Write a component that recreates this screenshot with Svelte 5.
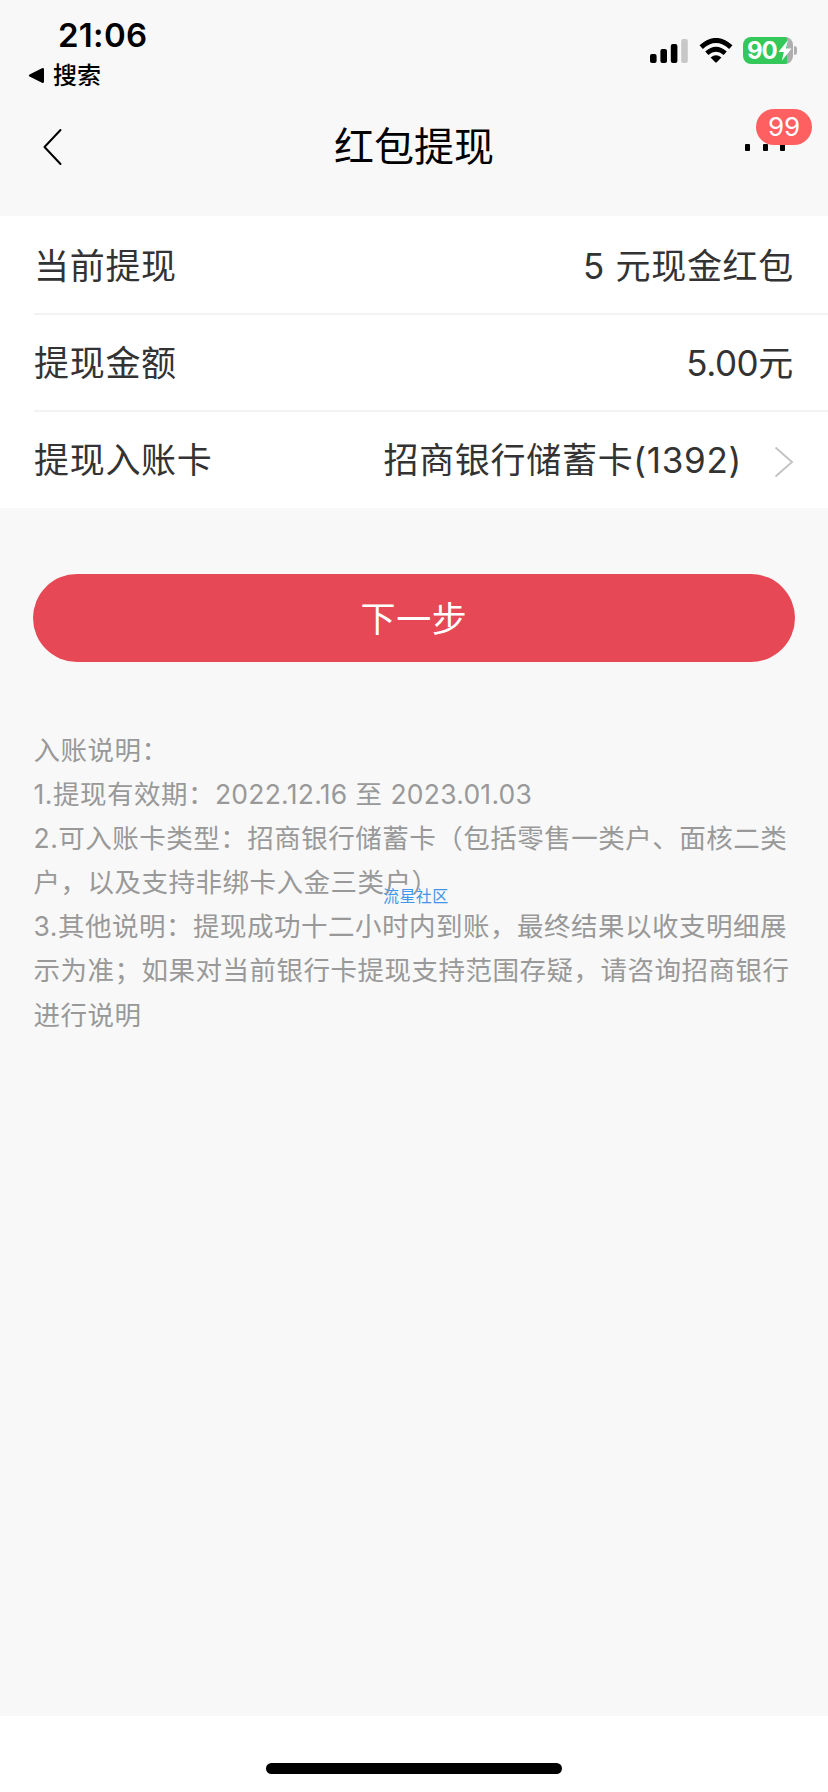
<script>
  const signal = [
    { x: 0, height: 9 },
    { x: 10.4, height: 14 },
    { x: 20.8, height: 19 },
    { x: 31.2, height: 24, weak: true },
  ];

  const rows = [
    { label: '当前提现', value: '5 元现金红包' },
    { label: '提现金额', value: '5.00元' },
    { label: '提现入账卡', value: '招商银行储蓄卡(1392)', link: true },
  ];

  const notes = [
    '入账说明：',
    '1.提现有效期：2022.12.16 至 2023.01.03',
    '2.可入账卡类型：招商银行储蓄卡（包括零售一类户、面核二类',
    '户，以及支持非绑卡入金三类户）',
    '3.其他说明：提现成功十二小时内到账，最终结果以收支明细展',
    '示为准；如果对当前银行卡提现支持范围存疑，请咨询招商银行',
    '进行说明',
  ];

  // amounts and dates get their own, tighter spacing
  const split = (text) => text.split(/(\d+\.\d[\d.]*)/).filter(Boolean);
  const isNumber = (part) => /^\d+\.\d/.test(part);
</script>

<div class="page">
  <header>
    <div class="status">
      <div class="status-left">
        <div class="time">21:06</div>
        <div class="return">
          <svg width="17" height="17" viewBox="0 0 17 17">
            <path d="M2 7.2 14 1.2Q16 .4 16 2.4V14.6Q16 16.6 14 15.8L2 9.8Q-.4 8.5 2 7.2Z" />
          </svg>
          <span>搜索</span>
        </div>
      </div>
      <div class="status-right">
        <svg class="signal" width="38" height="24" viewBox="0 0 38 24">
          {#each signal as bar}
            <rect x={bar.x} y={24 - bar.height} width="6.6" height={bar.height} rx="2" fill={bar.weak ? '#c7c7c7' : '#000'} />
          {/each}
        </svg>
        <svg class="wifi" width="34" height="25" viewBox="0 0 34 25">
          <path d="M2.2 9.2Q17-4.2 31.8 9.2" fill="none" stroke="#000" stroke-width="5" />
          <path d="M7.8 15.2Q17 7.2 26.2 15.2" fill="none" stroke="#000" stroke-width="4.8" />
          <path d="M11.6 19.4Q17 15 22.4 19.4L18 24Q17 25 16 24Z" />
        </svg>
        <div class="battery">
          <span>90</span>
          <svg width="14" height="21" viewBox="0 0 13 20">
            <path d="M9.2.2.2 11.5H5.4L3.5 19.8 12.8 8H7.4Z" fill="#fff" />
          </svg>
        </div>
        <div class="nub"></div>
      </div>
    </div>
    <nav>
      <button class="back" aria-label="返回">
        <svg width="20" height="38" viewBox="0 0 20 38">
          <path d="M17.5 2 1.5 19 17.5 36" fill="none" stroke="#000" stroke-width="2" stroke-linecap="round" stroke-linejoin="round" />
        </svg>
      </button>
      <h1>红包提现</h1>
      <button class="more" aria-label="更多">
        <i></i><i></i><i></i>
        <span class="badge">99</span>
      </button>
    </nav>
  </header>

  <main>
    <section class="list">
      {#each rows as row}
        <div class="row">
          <span>{row.label}</span>
          <span class="value">{#each split(row.value) as part}<span class:number={isNumber(part)}>{part}</span>{/each}</span>
          {#if row.link}
            <svg class="arrow" width="20" height="32" viewBox="0 0 20 32">
              <path d="M1.5 1.5 18 16 1.5 30.5" fill="none" stroke="#c4c4c4" stroke-width="2" />
            </svg>
          {/if}
        </div>
      {/each}
    </section>

    <button class="next">下一步</button>

    <section class="notes">
      {#each notes as line}
        <p>{#each split(line) as part}<span class:number={isNumber(part)}>{part}</span>{/each}</p>
      {/each}
      <span class="watermark">流星社区</span>
    </section>
  </main>

  <footer>
    <div class="home"></div>
  </footer>
</div>

<style>
  :global(body) {
    margin: 0;
  }

  .page {
    display: flex;
    flex-direction: column;
    width: 828px;
    height: 1792px;
    overflow: hidden;
    background: #f8f8f8;
    color: #333;
    font-family: Inter, 'Noto Sans CJK SC', sans-serif;
  }

  button {
    margin: 0;
    padding: 0;
    border: none;
    background: none;
    font-family: inherit;
  }

  svg {
    display: block;
    flex: none;
  }

  header {
    height: 216px;
    color: #000;
  }

  .status {
    display: flex;
    justify-content: space-between;
    height: 96px;
  }

  .status-left {
    padding: 15px 0 0 28px;
  }

  .time {
    padding-left: 30px;
    font-size: 33px;
    line-height: 40px;
    font-weight: 600;
    letter-spacing: 0.3px;
  }

  .return {
    display: flex;
    align-items: center;
    gap: 9px;
    height: 41px;
    font-size: 24px;
    line-height: 30px;
    font-weight: 500;
  }

  .return span {
    margin-left: -1px;
  }

  .status-right {
    display: flex;
    align-items: center;
    height: 27px;
    padding: 37px 31px 0 0;
  }

  .wifi {
    margin-left: 11px;
  }

  .battery {
    display: flex;
    align-items: center;
    gap: 1px;
    width: 46px;
    height: 27px;
    margin-left: 10px;
    padding-left: 4px;
    border-radius: 8px;
    background: linear-gradient(90deg, #34c759 44px, #aeaeae 44px);
    color: #fff;
    font-size: 24px;
    line-height: 27px;
    font-weight: 700;
    letter-spacing: -1px;
  }

  .nub {
    width: 3px;
    height: 9px;
    margin-left: 1px;
    border-radius: 0 4px 4px 0;
    background: #aeaeae;
  }

  nav {
    display: flex;
    align-items: center;
    justify-content: space-between;
    height: 102px;
    padding: 0 43px 0 43px;
  }

  .back {
    width: 40px;
  }

  h1 {
    margin: 0;
    font-size: 40px;
    line-height: 60px;
    font-weight: 400;
  }

  .more {
    position: relative;
    display: flex;
    justify-content: space-between;
    width: 40px;
  }

  .more i {
    width: 5px;
    height: 7px;
    border-radius: 1px;
    background: #000;
  }

  .badge {
    position: absolute;
    left: 11px;
    bottom: 6px;
    width: 56px;
    height: 36px;
    border-radius: 18px;
    background: #fe6061;
    color: #fff;
    font-size: 26px;
    line-height: 36px;
    font-weight: 400;
    text-align: center;
  }

  .list {
    padding: 2px 0 0 34px;
    background: #fff;
  }

  .row {
    display: flex;
    align-items: center;
    box-sizing: border-box;
    height: 97px;
    padding: 0 34px 5px 0;
    border-bottom: 2px solid #f3f3f3;
    font-size: 35px;
    letter-spacing: 0.7px;
    white-space: pre;
  }

  .row:last-child {
    height: 96px;
    border-bottom: none;
  }

  .value {
    margin-left: auto;
  }

  .value .number {
    letter-spacing: -0.4px;
  }

  .arrow {
    margin: 8px 0 0 32px;
  }

  .next {
    display: block;
    width: 762px;
    height: 88px;
    margin: 66px auto 0;
    padding-bottom: 3px;
    border-radius: 44px;
    background: #e64955;
    color: #fff;
    font-size: 35px;
    letter-spacing: 0.7px;
  }

  .notes {
    position: relative;
    margin-top: 66px;
    padding-left: 33.5px;
    color: #999;
    font-size: 26.5px;
    line-height: 44.1px;
    letter-spacing: 0.5px;
    white-space: pre;
  }

  .notes p {
    margin: 0;
  }

  .notes .number {
    letter-spacing: 0.25px;
  }

  .watermark {
    position: absolute;
    left: 383px;
    top: 156px;
    color: #3f97ea;
    font-size: 16px;
    line-height: 24px;
    letter-spacing: 0.4px;
  }

  footer {
    display: flex;
    justify-content: center;
    height: 29px;
    margin-top: auto;
    padding-top: 47px;
    background: #fff;
  }

  .home {
    width: 296px;
    height: 11px;
    border-radius: 6px;
    background: #000;
  }
</style>
